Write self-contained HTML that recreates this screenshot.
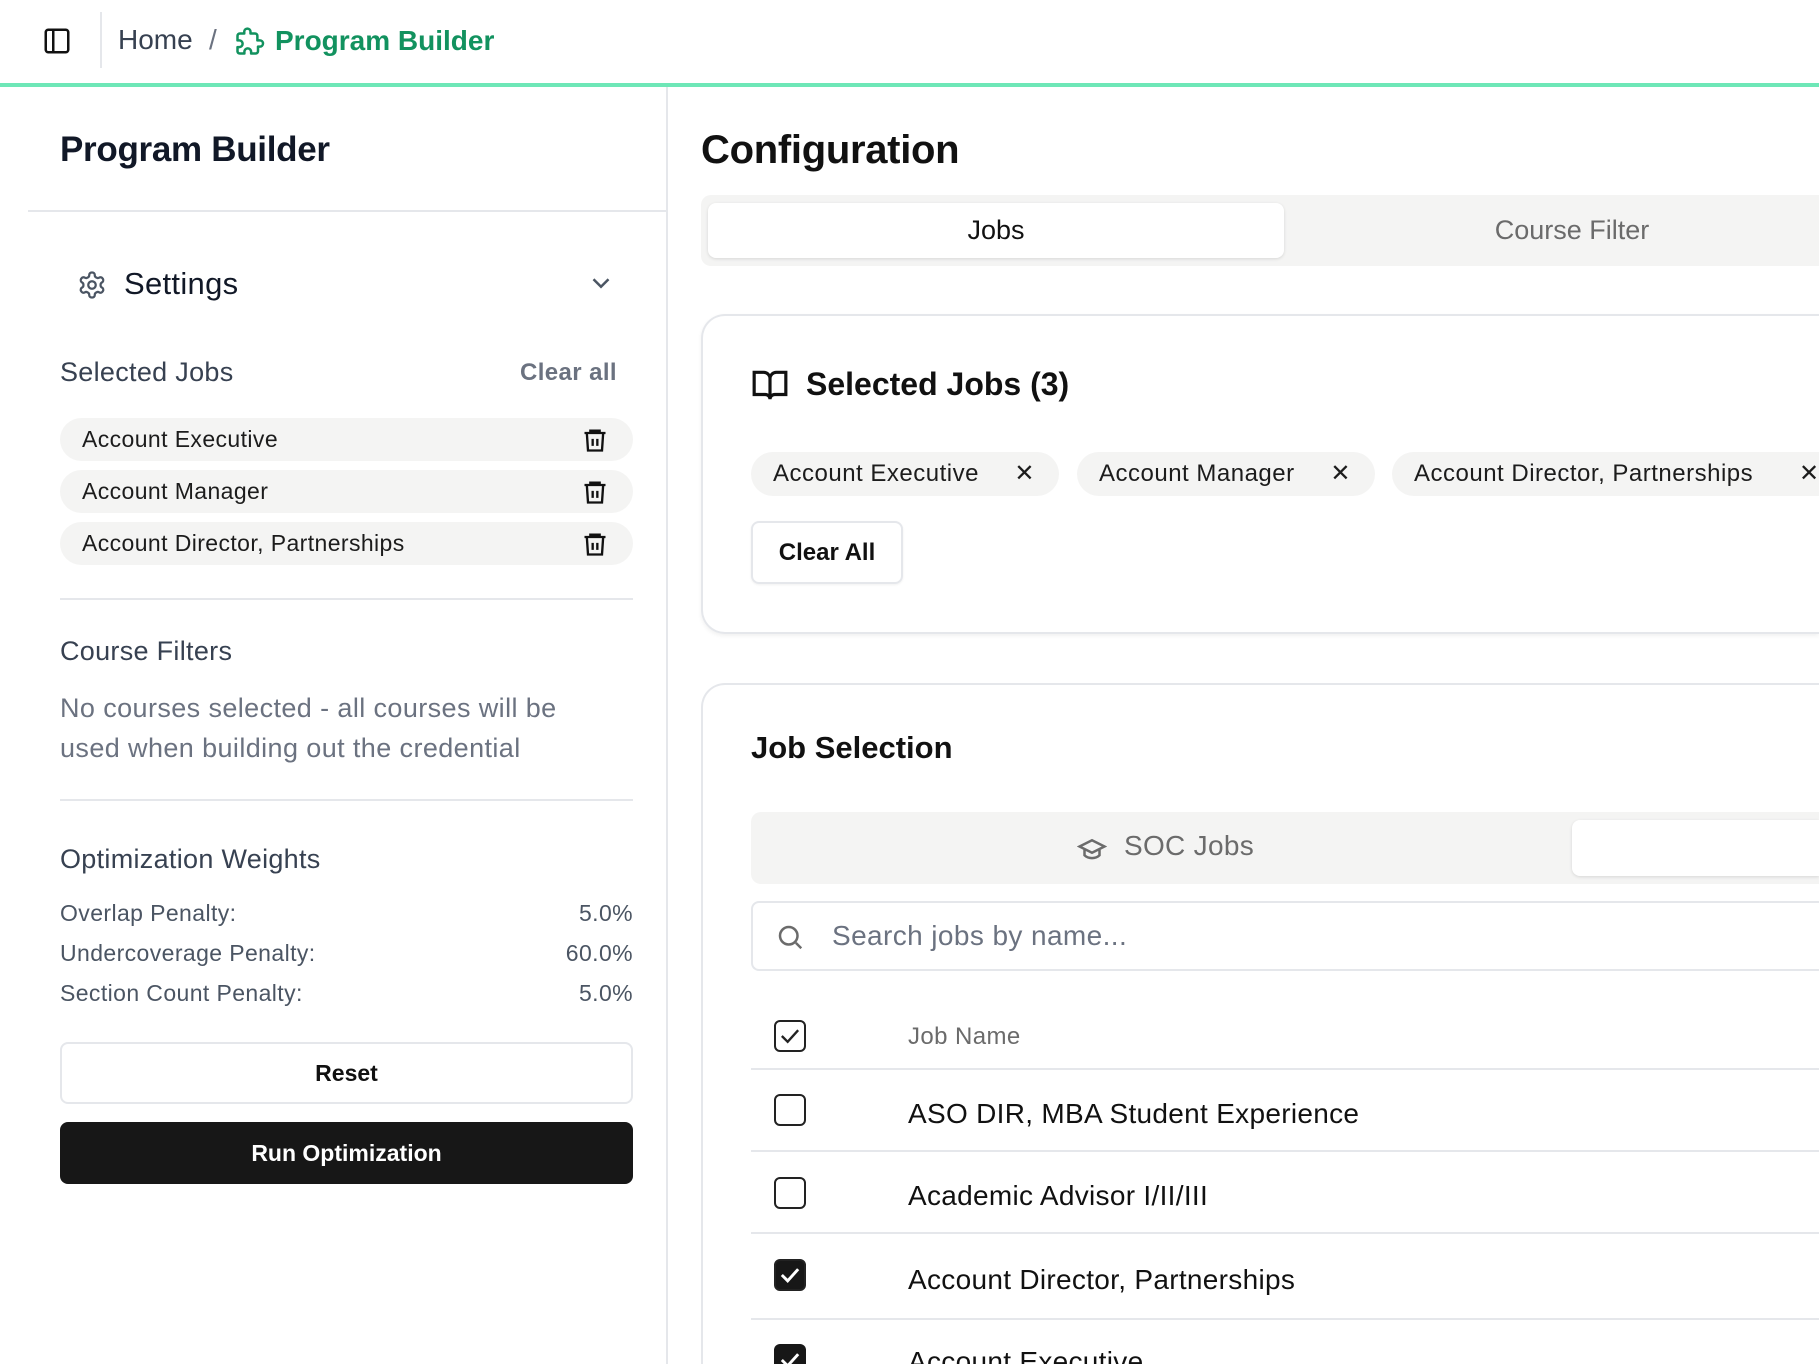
<!DOCTYPE html>
<html><head><meta charset="utf-8"><style>
*{box-sizing:border-box;margin:0;padding:0}
html,body{width:1819px;height:1364px;overflow:hidden;background:#fff}
body{font-family:"Liberation Sans",sans-serif;color:#111827}
#wrap{position:relative;width:1819px;height:1364px;overflow:hidden}
.a{position:absolute;white-space:nowrap}
.pill{position:absolute;left:60px;width:573px;height:43px;background:#f4f4f3;border-radius:22px;font-size:23px;color:#1c1c1c;padding-left:22px;line-height:43px;letter-spacing:0.4px}
.pill svg{position:absolute;right:24px;top:8px}
.hr{position:absolute;height:2px;background:#e5e7eb}
.w{font-size:23px;color:#4b5563;letter-spacing:0.4px}
.chip{position:absolute;top:452px;height:44px;background:#f4f4f3;border-radius:22px;font-size:24px;color:#1c1c1c;line-height:44px;padding-left:22px;letter-spacing:0.5px}
.cb{position:absolute;left:774px;width:32px;height:32px;border:2px solid #222;border-radius:6px}
.row{position:absolute;left:908px;font-size:28px;color:#111;letter-spacing:0.3px}
.rl{position:absolute;left:751px;right:0;height:2px;background:#e5e7eb}
</style></head><body><div id="wrap">
<svg class="a" style="left:42px;top:26px" width="30" height="30" viewBox="0 0 24 24" fill="none" stroke="#111" stroke-width="2"><rect x="3" y="3" width="18" height="18" rx="2"/><path d="M9 3v18"/></svg>
<div class="a" style="left:100px;top:12px;width:2px;height:56px;background:#e5e7eb"></div>
<div class="a" style="left:118px;top:24px;font-size:28px;color:#374151">Home</div>
<div class="a" style="left:209px;top:24px;font-size:28px;color:#6b7280">/</div>
<svg class="a" style="left:235px;top:26px" width="30" height="30" viewBox="0 0 24 24" fill="none" stroke="#12925f" stroke-width="2" stroke-linejoin="round"><path d="M19.4 11.5h-1.5V7.9a1.9 1.9 0 0 0-1.9-1.9h-3.6V4.6a2.5 2.5 0 0 0-5 0V6H3.9A1.9 1.9 0 0 0 2 7.9v3.6h1.4a2.7 2.7 0 0 1 0 5.4H2v3.6A1.9 1.9 0 0 0 3.9 22h3.6v-1.4a2.7 2.7 0 0 1 5.4 0V22h3.6a1.9 1.9 0 0 0 1.9-1.9v-3.6h1.5a2.5 2.5 0 0 0 0-5z"/></svg>
<div class="a" style="left:275px;top:25px;font-size:28px;color:#12925f;font-weight:600">Program Builder</div>
<div class="a" style="left:0;top:83px;width:1819px;height:4px;background:#6ee7b7"></div>
<div class="a" style="left:666px;top:87px;width:2px;height:1277px;background:#e5e7eb"></div>
<div class="a" style="left:60px;top:130px;font-size:35px;font-weight:700;color:#111827;letter-spacing:-0.3px">Program Builder</div>
<div class="hr" style="left:28px;top:210px;width:639px"></div>
<svg class="a" style="left:77px;top:270px" width="30" height="30" viewBox="0 0 24 24" fill="none" stroke="#4b5563" stroke-width="1.8"><path d="M12.22 2h-.44a2 2 0 0 0-2 2v.18a2 2 0 0 1-1 1.73l-.43.25a2 2 0 0 1-2 0l-.15-.08a2 2 0 0 0-2.73.73l-.22.38a2 2 0 0 0 .73 2.73l.15.1a2 2 0 0 1 1 1.72v.51a2 2 0 0 1-1 1.74l-.15.09a2 2 0 0 0-.73 2.73l.22.38a2 2 0 0 0 2.73.73l.15-.08a2 2 0 0 1 2 0l.43.25a2 2 0 0 1 1 1.73V20a2 2 0 0 0 2 2h.44a2 2 0 0 0 2-2v-.18a2 2 0 0 1 1-1.73l.43-.25a2 2 0 0 1 2 0l.15.08a2 2 0 0 0 2.73-.73l.22-.39a2 2 0 0 0-.73-2.73l-.15-.08a2 2 0 0 1-1-1.74v-.5a2 2 0 0 1 1-1.74l.15-.09a2 2 0 0 0 .73-2.73l-.22-.38a2 2 0 0 0-2.73-.73l-.15.08a2 2 0 0 1-2 0l-.43-.25a2 2 0 0 1-1-1.73V4a2 2 0 0 0-2-2z"/><circle cx="12" cy="12" r="3"/></svg>
<div class="a" style="left:124px;top:266px;font-size:31px;color:#111827;letter-spacing:0.3px">Settings</div>
<svg class="a" style="left:586px;top:268px" width="30" height="30" viewBox="0 0 24 24" fill="none" stroke="#4b5563" stroke-width="2"><path d="M6 9l6 6 6-6"/></svg>
<div class="a" style="left:60px;top:357px;font-size:27px;color:#374151;letter-spacing:0.3px">Selected Jobs</div>
<div class="a" style="left:520px;top:359px;font-size:24px;color:#6b7280;font-weight:600;letter-spacing:0.4px">Clear all</div>
<div class="pill" style="top:418px">Account Executive<svg width="28" height="28" viewBox="0 0 24 24" fill="none" stroke="#111" stroke-width="2"><path d="M3 6h18M8 6V4h8v2M5 6l1 15h12l1-15M10 11v6M14 11v6"/></svg></div>
<div class="pill" style="top:470px">Account Manager<svg width="28" height="28" viewBox="0 0 24 24" fill="none" stroke="#111" stroke-width="2"><path d="M3 6h18M8 6V4h8v2M5 6l1 15h12l1-15M10 11v6M14 11v6"/></svg></div>
<div class="pill" style="top:522px">Account Director, Partnerships<svg width="28" height="28" viewBox="0 0 24 24" fill="none" stroke="#111" stroke-width="2"><path d="M3 6h18M8 6V4h8v2M5 6l1 15h12l1-15M10 11v6M14 11v6"/></svg></div>
<div class="hr" style="left:60px;top:598px;width:573px"></div>
<div class="a" style="left:60px;top:636px;font-size:27px;color:#374151;letter-spacing:0.3px">Course Filters</div>
<div class="a" style="left:60px;top:688px;font-size:27px;color:#6b7280;line-height:40px;white-space:normal;width:530px;letter-spacing:0.4px">No courses selected - all courses will be used when building out the credential</div>
<div class="hr" style="left:60px;top:799px;width:573px"></div>
<div class="a" style="left:60px;top:844px;font-size:27px;color:#374151;letter-spacing:0.3px">Optimization Weights</div>
<div class="a w" style="left:60px;top:900px">Overlap Penalty:</div><div class="a w" style="right:1186px;top:900px">5.0%</div>
<div class="a w" style="left:60px;top:940px">Undercoverage Penalty:</div><div class="a w" style="right:1186px;top:940px">60.0%</div>
<div class="a w" style="left:60px;top:980px">Section Count Penalty:</div><div class="a w" style="right:1186px;top:980px">5.0%</div>
<div class="a" style="left:60px;top:1042px;width:573px;height:62px;border:2px solid #e5e7eb;border-radius:8px;text-align:center;line-height:58px;font-size:23px;font-weight:700;color:#111">Reset</div>
<div class="a" style="left:60px;top:1122px;width:573px;height:62px;background:#171717;border-radius:8px;text-align:center;line-height:62px;font-size:23px;font-weight:700;color:#fff">Run Optimization</div>
<div class="a" style="left:701px;top:128px;font-size:40px;font-weight:700;color:#111;letter-spacing:-0.3px">Configuration</div>
<div class="a" style="left:701px;top:195px;width:1118px;height:71px;background:#f4f4f3;border-radius:10px 0 0 10px"></div>
<div class="a" style="left:708px;top:203px;width:576px;height:55px;background:#fff;border-radius:8px;box-shadow:0 1px 3px rgba(0,0,0,.12);text-align:center;line-height:55px;font-size:27px;color:#111">Jobs</div>
<div class="a" style="left:1284px;top:203px;width:576px;height:55px;text-align:center;line-height:55px;font-size:27px;color:#6b6b6b">Course Filter</div>
<div class="a" style="left:701px;top:314px;width:1118px;height:320px;border:2px solid #e5e7eb;border-right:none;border-radius:24px 0 0 24px;box-shadow:0 2px 4px rgba(0,0,0,.06)"></div>
<svg class="a" style="left:751px;top:366px" width="38" height="38" viewBox="0 0 24 24" fill="none" stroke="#111" stroke-width="2"><path d="M2 4h6a4 4 0 0 1 4 4v13a3 3 0 0 0-3-3H2zM22 4h-6a4 4 0 0 0-4 4v13a3 3 0 0 1 3-3h7z"/></svg>
<div class="a" style="left:806px;top:366px;font-size:32px;font-weight:600;color:#111">Selected Jobs (3)</div>
<div class="chip" style="left:751px;width:308px">Account Executive<span style="position:absolute;right:24px;font-size:24px">✕</span></div>
<div class="chip" style="left:1077px;width:298px">Account Manager<span style="position:absolute;right:24px;font-size:24px">✕</span></div>
<div class="chip" style="left:1392px;width:427px;border-radius:22px 0 0 22px">Account Director, Partnerships<span style="position:absolute;left:407px;font-size:24px">✕</span></div>
<div class="a" style="left:751px;top:521px;width:152px;height:63px;border:2px solid #e5e7eb;border-radius:8px;text-align:center;line-height:59px;font-size:24px;font-weight:700;color:#111;box-shadow:0 1px 2px rgba(0,0,0,.06)">Clear All</div>
<div class="a" style="left:701px;top:683px;width:1118px;height:681px;border:2px solid #e5e7eb;border-right:none;border-bottom:none;border-radius:24px 0 0 0"></div>
<div class="a" style="left:751px;top:730px;font-size:31px;font-weight:600;color:#111">Job Selection</div>
<div class="a" style="left:751px;top:812px;width:1068px;height:72px;background:#f4f4f3;border-radius:10px 0 0 10px"></div>
<div class="a" style="left:1572px;top:820px;width:247px;height:56px;background:#fff;border-radius:8px 0 0 8px;box-shadow:0 1px 3px rgba(0,0,0,.12)"></div>
<svg class="a" style="left:1077px;top:834px" width="30" height="30" viewBox="0 0 24 24" fill="none" stroke="#6b6b6b" stroke-width="2"><path d="M22 10L12 5 2 10l10 5 10-5zM6 12v5c3 3 9 3 12 0v-5"/></svg>
<div class="a" style="left:1124px;top:830px;font-size:28px;color:#6b6b6b;letter-spacing:0.3px">SOC Jobs</div>
<div class="a" style="left:751px;top:901px;width:1068px;height:70px;border:2px solid #e5e7eb;border-right:none;border-radius:8px 0 0 8px"></div>
<svg class="a" style="left:775px;top:922px" width="30" height="30" viewBox="0 0 24 24" fill="none" stroke="#6b6b6b" stroke-width="2"><circle cx="11" cy="11" r="7"/><path d="M21 21l-4.3-4.3"/></svg>
<div class="a" style="left:832px;top:920px;font-size:28px;color:#6b7280;letter-spacing:0.4px">Search jobs by name...</div>
<div class="cb" style="top:1020px"><svg width="28" height="28" viewBox="0 0 24 24" fill="none" stroke="#222" stroke-width="2" style="position:absolute;left:0;top:0"><path d="M5 12l5 5 9-10"/></svg></div>
<div class="a" style="left:908px;top:1023px;font-size:24px;color:#6b6b6b;letter-spacing:0.4px">Job Name</div>
<div class="rl" style="top:1068px"></div>
<div class="cb" style="top:1094px"></div><div class="row" style="top:1098px">ASO DIR, MBA Student Experience</div>
<div class="rl" style="top:1150px"></div>
<div class="cb" style="top:1177px"></div><div class="row" style="top:1180px">Academic Advisor I/II/III</div>
<div class="rl" style="top:1232px"></div>
<div class="cb" style="top:1259px;background:#171717"><svg width="28" height="28" viewBox="0 0 24 24" fill="none" stroke="#fff" stroke-width="2.5" style="position:absolute;left:0;top:0"><path d="M5 12l5 5 9-10"/></svg></div><div class="row" style="top:1264px">Account Director, Partnerships</div>
<div class="rl" style="top:1318px"></div>
<div class="a" style="left:774px;top:1344px;width:32px;height:20px;overflow:hidden"><div style="width:32px;height:32px;background:#171717;border-radius:6px;position:relative"><svg width="28" height="28" viewBox="0 0 24 24" fill="none" stroke="#fff" stroke-width="2.5" style="position:absolute;left:2px;top:2px"><path d="M5 12l5 5 9-10"/></svg></div></div>
<div class="a" style="left:908px;top:1346px;height:18px;overflow:hidden;font-size:28px;color:#111;letter-spacing:0.3px;line-height:32px">Account Executive</div>
</div></body></html>
